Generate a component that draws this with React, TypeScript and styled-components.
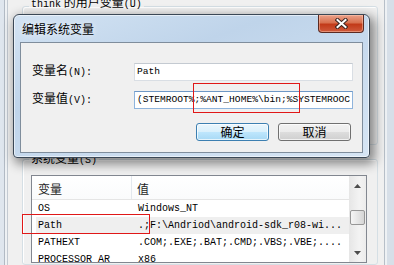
import React from 'react';
import styled, { createGlobalStyle } from 'styled-components';

const GlobalStyle = createGlobalStyle`
  html, body {
    margin: 0;
    padding: 0;
    background: #f0f0f0;
  }
  body {
    font-family: "Noto Sans CJK SC", "Liberation Sans", sans-serif;
    font-size: 12px;
    color: #000;
  }
`;

const Desktop = styled.div`
  position: relative;
  width: 394px;
  height: 265px;
  overflow: hidden;
`;

/* ---------- background window ---------- */

const ParentWindow = styled.div`
  display: flex;
  height: 100%;
`;

const SideFrame = styled.div<{ $side: 'left' | 'right' }>`
  flex: none;
  width: ${p => (p.$side === 'left' ? 8 : 10)}px;
  background: ${p =>
    p.$side === 'left'
      ? 'linear-gradient(to right, #dfe6ee 0 4px, #b2bac4 4px 5px, #eef1f4 5px 7px, #c3cad2 7px 8px)'
      : 'linear-gradient(to right, #b7bfc8 0 1px, #eef1f4 1px 3px, #d7dfe8 3px 10px)'};
`;

const ParentClient = styled.div`
  flex: 1;
  display: flex;
  flex-direction: column;
  padding: 0 6px 0 14px;
  background: #f0f0f0;
`;

const GroupBox = styled.fieldset<{ $height?: number; $gapTop: number; $padTop: number }>`
  margin: ${p => p.$gapTop}px 0 0 0;
  padding: ${p => p.$padTop}px 10px 0 8px;
  min-width: 0;
  border: 1px solid #d5dfe5;
  border-radius: 3px;
  box-shadow: inset 1px 1px 0 #fff;
  ${p => (p.$height ? `height: ${p.$height}px; box-sizing: border-box;` : 'flex: 1;')}
`;

const GroupLegend = styled.legend<{ $lift?: number }>`
  margin-left: -2px;
  padding: 0 2px ${p => p.$lift ?? 0}px 2px;
  font-size: 12px;
  line-height: 16px;
`;

const Ascii = styled.span<{ $size?: number }>`
  font-family: "Liberation Mono", "DejaVu Sans Mono", monospace;
  font-size: ${p => p.$size ?? 10}px;
`;

const ListView = styled.div`
  display: flex;
  height: 88px;
  box-sizing: border-box;
  border: 1px solid #828790;
  background: #fff;
  overflow: hidden;
`;

const ListBody = styled.div`
  flex: 1;
  min-width: 0;
  display: flex;
  flex-direction: column;
`;

const HeaderRow = styled.div`
  display: grid;
  grid-template-columns: 100px 1fr;
  height: 24px;
  flex: none;
  box-sizing: border-box;
  border-bottom: 1px solid #e5e5e5;
  background: linear-gradient(#ffffff, #fafbfc);
`;

const HeaderCell = styled.div<{ $pad: number; $divider?: boolean }>`
  padding: 5px 0 0 ${p => p.$pad}px;
  font-size: 12px;
  line-height: 16px;
  color: #1e1e1e;
  border-right: ${p => (p.$divider ? '1px solid #e3e8ee' : 'none')};
`;

const Row = styled.div<{ $selected?: boolean }>`
  display: grid;
  grid-template-columns: 96px 1fr;
  flex: none;
  height: 17px;
  margin-left: 4px;
  align-items: center;
  background: ${p => (p.$selected ? '#efefef' : 'transparent')};
  font-family: "Liberation Mono", "DejaVu Sans Mono", monospace;
  font-size: 10px;
  white-space: nowrap;
  overflow: hidden;
`;

const Cell = styled.div<{ $pad: number }>`
  padding-left: ${p => p.$pad}px;
  overflow: hidden;
`;

const ScrollBar = styled.div`
  flex: none;
  width: 17px;
  display: flex;
  flex-direction: column;
  background: linear-gradient(to right, #e6e6e6, #f3f3f3 60%, #ececec);
`;

const ScrollButton = styled.div<{ $height: number }>`
  height: ${p => p.$height}px;
  display: flex;
  align-items: center;
  justify-content: center;
`;

const ScrollTrack = styled.div`
  flex: 1;
  padding: 14px 1px 0 1px;
`;

const Thumb = styled.div`
  height: 15px;
  box-sizing: border-box;
  border: 1px solid #979797;
  border-radius: 2px;
  background: linear-gradient(to right, #f5f5f5, #e6e6e6 50%, #d5d5d5);
`;

/* ---------- edit dialog ---------- */

const Dialog = styled.div`
  position: absolute;
  left: 13px;
  top: 14px;
  width: 357px;
  height: 144px;
  box-sizing: border-box;
  display: flex;
  flex-direction: column;
  padding: 0 6px 4px 6px;
  border: 1px solid #3b4856;
  border-radius: 6px 6px 4px 4px;
  background: linear-gradient(160deg, #d3e3f3 0%, #bfd4ea 35%, #cadcef 65%, #d6e5f4 100%);
  box-shadow: inset 0 0 0 1px rgba(255, 255, 255, 0.55), 3px 4px 11px 2px rgba(0, 0, 0, 0.45);
`;

const TitleBar = styled.div`
  display: flex;
  justify-content: space-between;
  align-items: flex-start;
  height: 27px;
  flex: none;
`;

const TitleText = styled.div`
  padding: 6px 0 0 2px;
  font-size: 12px;
  line-height: 16px;
  color: #000;
  text-shadow: 0 0 6px rgba(255, 255, 255, 0.9);
`;

const CloseButton = styled.div`
  width: 46px;
  height: 18px;
  margin-right: -1px;
  box-sizing: border-box;
  display: flex;
  align-items: center;
  justify-content: center;
  border: 1px solid #5b2a22;
  border-top: none;
  border-radius: 0 0 4px 4px;
  background: linear-gradient(#eba18a 0%, #d8714f 45%, #c23a19 55%, #cf5a3c 100%);
  box-shadow: inset 0 0 0 1px rgba(255, 210, 190, 0.45);
`;

const DialogClient = styled.div`
  flex: 1;
  display: flex;
  flex-direction: column;
  padding: 19px 9px 0 11px;
  border: 1px solid #7f8d9c;
  background: #f0f0f0;
`;

const FieldGrid = styled.div`
  display: grid;
  grid-template-columns: 102px 1fr;
  row-gap: 9px;
  align-items: center;
`;

const FieldLabel = styled.div`
  font-size: 12px;
  line-height: 16px;
`;

const TextBox = styled.div<{ $focused?: boolean }>`
  height: 18px;
  box-sizing: border-box;
  padding: 0 0 0 2px;
  border: 1px solid ${p => (p.$focused ? '#8fb4dc' : '#d9dee4')};
  border-top-color: ${p => (p.$focused ? '#6e98c6' : '#c4cad1')};
  background: #fff;
  font-family: "Liberation Mono", "DejaVu Sans Mono", monospace;
  font-size: 9.6px;
  line-height: 16px;
  white-space: nowrap;
  overflow: hidden;
`;

const ButtonRow = styled.div`
  display: flex;
  justify-content: flex-end;
  gap: 9px;
  margin: 14px 2px 0 0;
`;

const PushButton = styled.div<{ $default?: boolean }>`
  width: 73px;
  height: 18px;
  box-sizing: border-box;
  display: flex;
  align-items: center;
  justify-content: center;
  border: 1px solid ${p => (p.$default ? '#3c7fb1' : '#707070')};
  border-radius: 3px;
  background: ${p =>
    p.$default
      ? 'linear-gradient(#eaf6fd 0%, #d9f0fc 50%, #bee6fd 51%, #a7d9f5 100%)'
      : 'linear-gradient(#f2f2f2 0%, #ebebeb 50%, #dddddd 51%, #cfcfcf 100%)'};
  box-shadow: inset 0 0 0 1px rgba(255, 255, 255, 0.7);
  font-size: 12px;
  line-height: 16px;
`;

/* ---------- red annotation boxes ---------- */

const Marker = styled.div`
  position: absolute;
  box-sizing: border-box;
  border: 1px solid #e01818;
  pointer-events: none;
`;

const Arrow = ({ up }: { up?: boolean }) => (
  <svg width="7" height="4" viewBox="0 0 7 4">
    <path d={up ? 'M0 4 L3.5 0 L7 4 Z' : 'M0 0 L3.5 4 L7 0 Z'} fill="#4d4d4d" />
  </svg>
);

const CloseGlyph = () => (
  <svg width="13" height="11" viewBox="0 0 13 11">
    <path d="M2.5 2 L10.5 9 M10.5 2 L2.5 9" stroke="#3b2622" strokeWidth="4" strokeLinecap="square" />
    <path d="M2.5 2 L10.5 9 M10.5 2 L2.5 9" stroke="#ffffff" strokeWidth="2" strokeLinecap="square" />
  </svg>
);

const systemVars = [
  { name: 'OS', value: 'Windows_NT' },
  { name: 'Path', value: '.;F:\\Andriod\\android-sdk_r08-wi...', selected: true },
  { name: 'PATHEXT', value: '.COM;.EXE;.BAT;.CMD;.VBS;.VBE;....' },
  { name: 'PROCESSOR_AR', value: 'x86' },
];

export default function App() {
  return (
    <Desktop>
      <GlobalStyle />
      <ParentWindow>
        <SideFrame $side="left" />
        <ParentClient>
          <GroupBox $gapTop={-6} $padTop={3} $height={151}>
            <GroupLegend $lift={6}>
              <Ascii>think</Ascii> 的用户变量<Ascii>(U)</Ascii>
            </GroupLegend>
          </GroupBox>
          <GroupBox $gapTop={5} $padTop={6}>
            <GroupLegend>
              系统变量<Ascii>(S)</Ascii>
            </GroupLegend>
            <ListView>
              <ListBody>
                <HeaderRow>
                  <HeaderCell $pad={6} $divider>变量</HeaderCell>
                  <HeaderCell $pad={5}>值</HeaderCell>
                </HeaderRow>
                {systemVars.map(v => (
                  <Row key={v.name} $selected={v.selected}>
                    <Cell $pad={2}>{v.name}</Cell>
                    <Cell $pad={6}>{v.value}</Cell>
                  </Row>
                ))}
              </ListBody>
              <ScrollBar>
                <ScrollButton $height={20}>
                  <Arrow up />
                </ScrollButton>
                <ScrollTrack>
                  <Thumb />
                </ScrollTrack>
                <ScrollButton $height={19}>
                  <Arrow />
                </ScrollButton>
              </ScrollBar>
            </ListView>
          </GroupBox>
        </ParentClient>
        <SideFrame $side="right" />
      </ParentWindow>

      <Dialog>
        <TitleBar>
          <TitleText>编辑系统变量</TitleText>
          <CloseButton>
            <CloseGlyph />
          </CloseButton>
        </TitleBar>
        <DialogClient>
          <FieldGrid>
            <FieldLabel>
              变量名<Ascii>(N):</Ascii>
            </FieldLabel>
            <TextBox>Path</TextBox>
            <FieldLabel>
              变量值<Ascii>(V):</Ascii>
            </FieldLabel>
            <TextBox $focused>(STEMROOT%;%ANT_HOME%\bin;%SYSTEMROOC</TextBox>
          </FieldGrid>
          <ButtonRow>
            <PushButton $default>确定</PushButton>
            <PushButton>取消</PushButton>
          </ButtonRow>
        </DialogClient>
      </Dialog>

      <Marker style={{ left: 193, top: 83, width: 107, height: 30 }} />
      <Marker style={{ left: 22, top: 214, width: 128, height: 20 }} />
    </Desktop>
  );
}
